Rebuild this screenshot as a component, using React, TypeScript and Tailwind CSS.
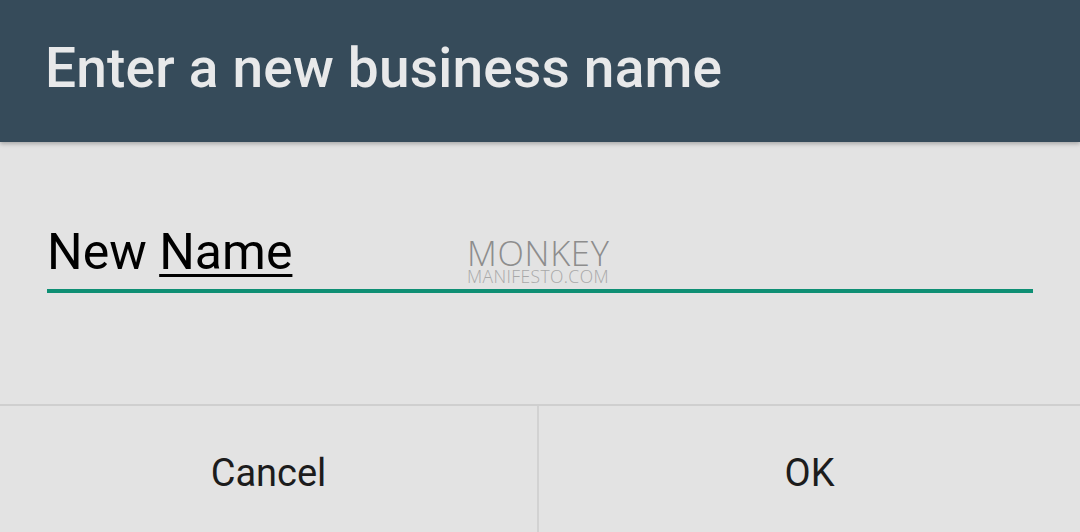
export default function App() {
  return (
    <div className="w-[1080px] h-[532px] bg-[#e3e3e3] flex flex-col overflow-hidden" style={{ fontFamily: "Roboto, 'Noto Sans', sans-serif" }}>
      <div className="h-[142px] shrink-0 bg-[#364b5a] flex items-center pl-[45px] shadow-[0_2px_4px_rgba(0,0,0,0.25)] relative z-10">
        <span className="text-[#e8e9ea] text-[55px] font-medium tracking-[0.2px] leading-none mt-[-6px]">Enter a new business name</span>
      </div>
      <div className="h-[262px] shrink-0 px-[47px] pt-[85px] relative">
        <div className="relative h-[66px] border-b-[4px] border-[#0e8f74] w-[986px]">
          <span className="text-black text-[50px] leading-none absolute left-[0px] top-[0px]">
            New <span className="underline decoration-[3px] underline-offset-[5px]">Name</span>
          </span>
          <div className="absolute left-[420px] top-[11px] flex flex-col items-start text-[#8d8d8d]" style={{ fontFamily: "'Open Sans', sans-serif" }}>
            <span className="text-[34.5px] font-light leading-[30px] tracking-[0.7px]">MONKEY</span>
            <span className="text-[17.5px] font-light leading-[17px] tracking-[0.4px] text-[#a8a8a8]">MANIFESTO.COM</span>
          </div>
        </div>
      </div>
      <div className="flex-1 border-t-[2px] border-[#cfcfcf] flex">
        <div className="w-[539px] border-r-[2px] border-[#d2d2d2] flex items-center justify-center">
          <span className="text-[#1c1c1c] text-[38px] leading-none mt-[8px]">Cancel</span>
        </div>
        <div className="flex-1 flex items-center justify-center">
          <span className="text-[#1c1c1c] text-[38px] leading-none mt-[8px]">OK</span>
        </div>
      </div>
    </div>
  );
}
